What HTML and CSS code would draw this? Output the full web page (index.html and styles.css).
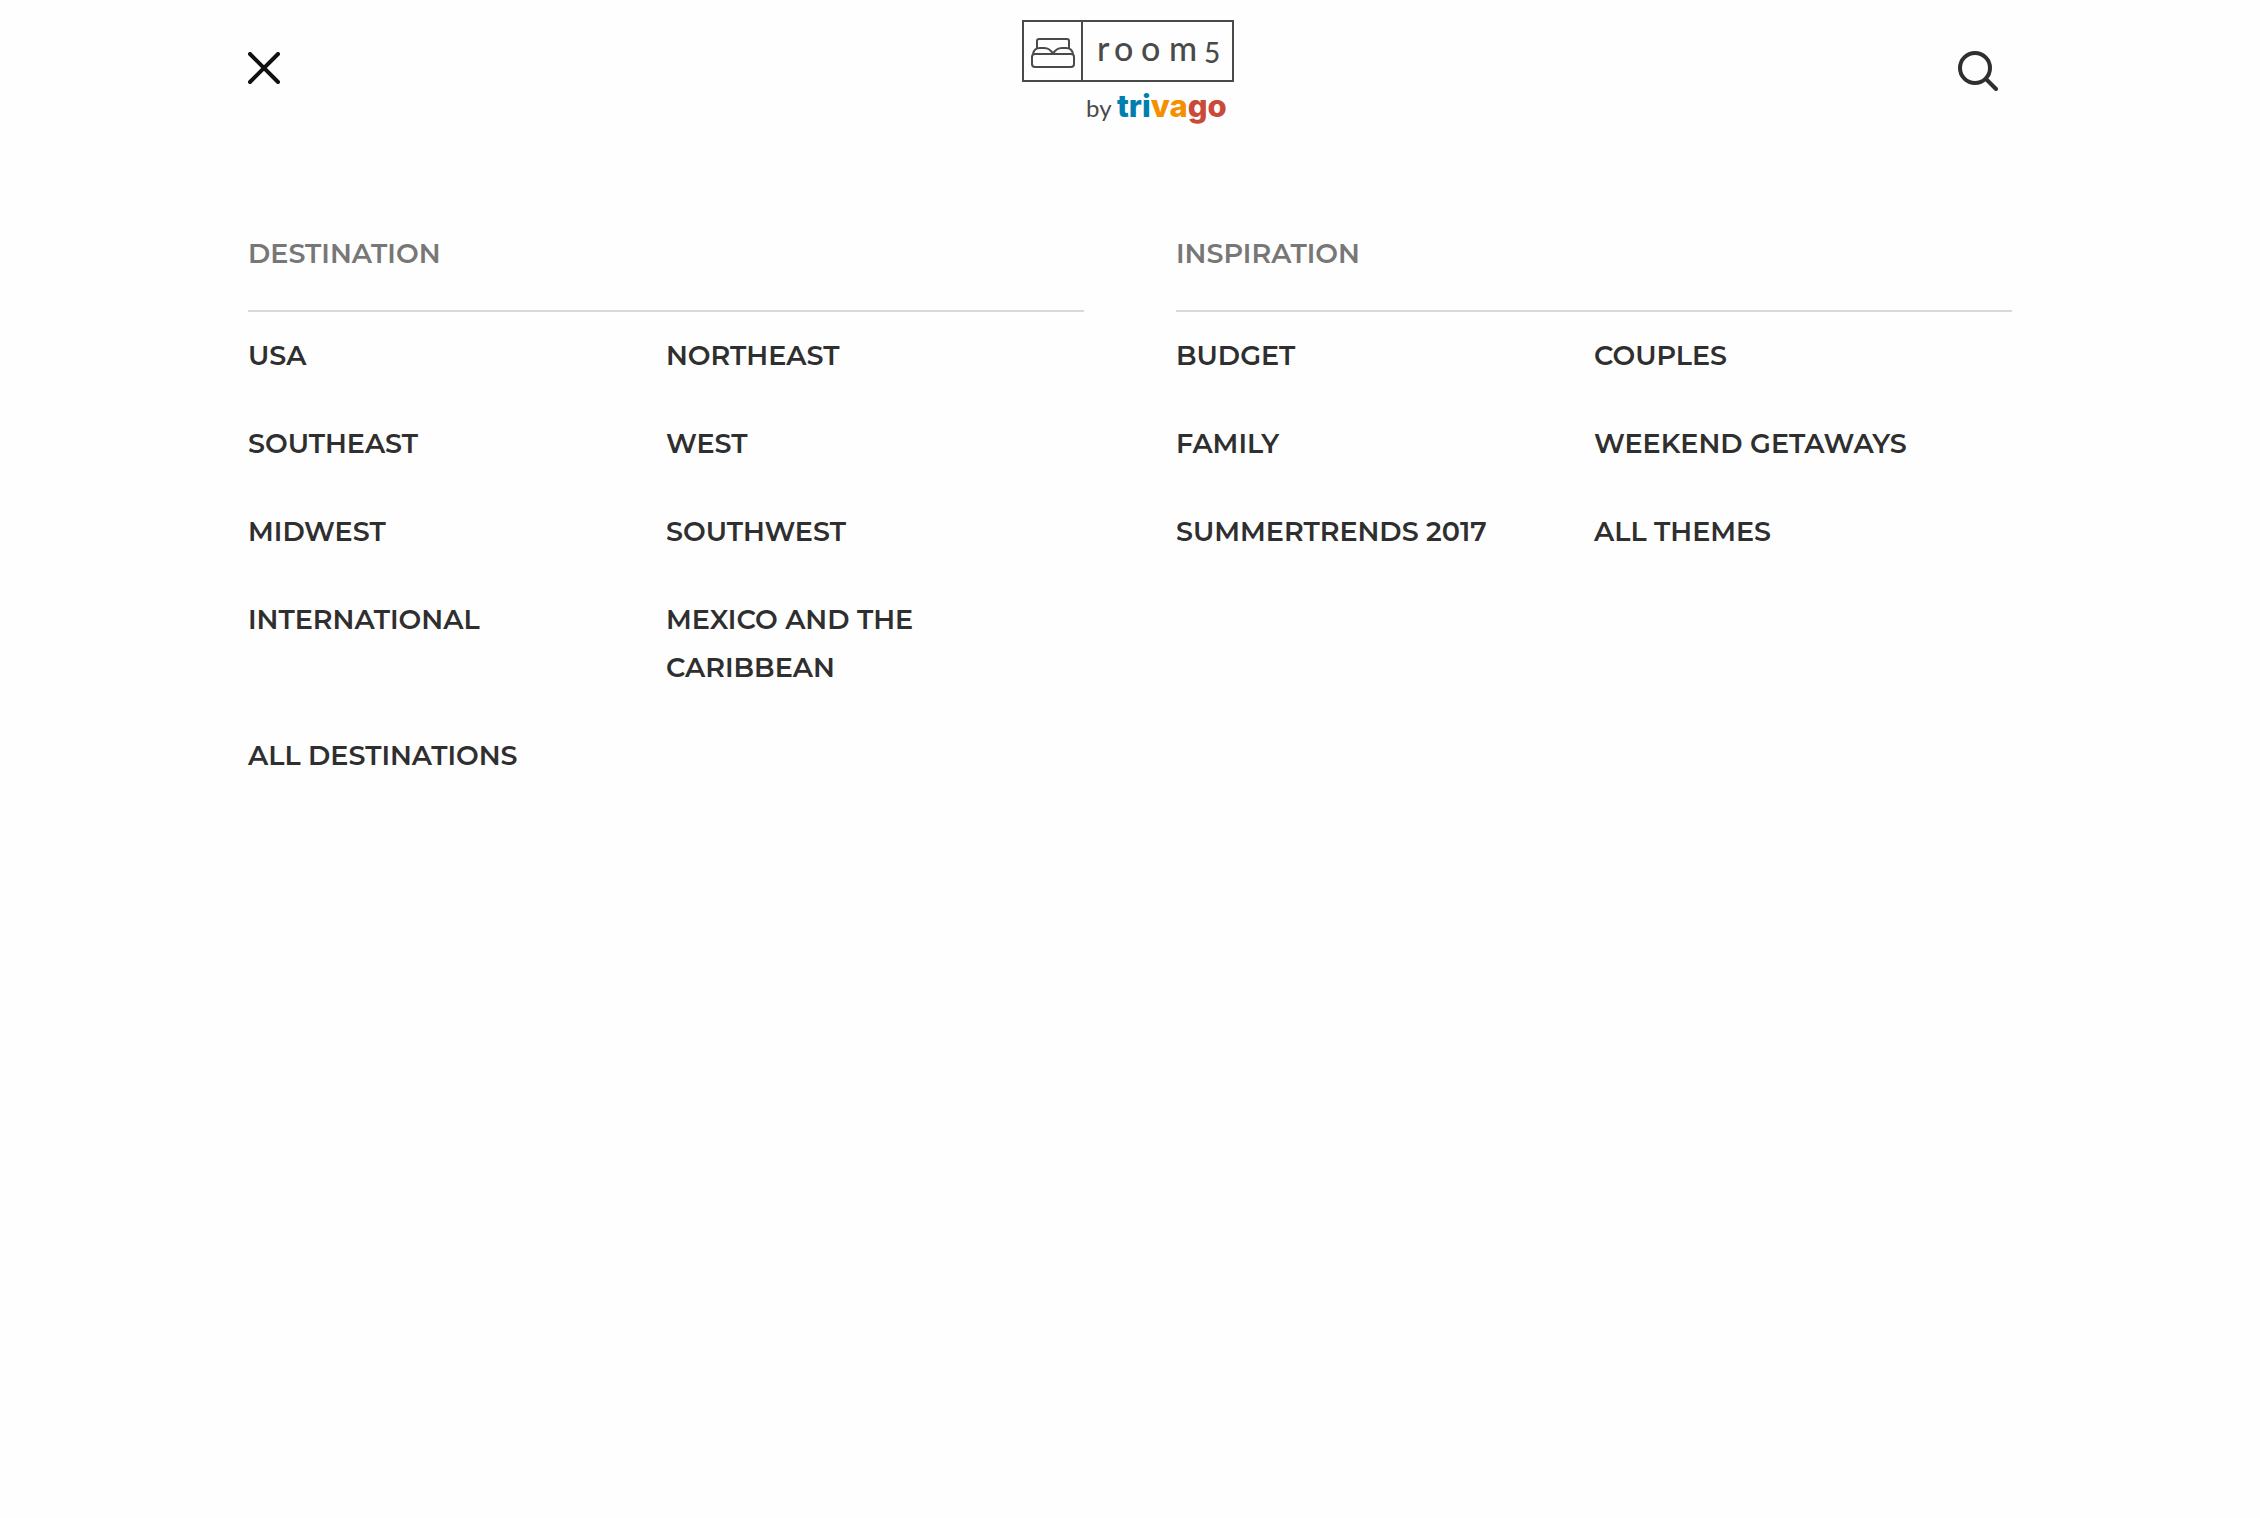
FILE: index.html
```html
<!DOCTYPE html>
<html lang="en">
<head>
<meta charset="utf-8">
<meta name="viewport" content="width=device-width, initial-scale=1">
<title>room5 by trivago</title>
<link rel="stylesheet" href="styles.css">
</head>
<body>
<header class="header container">
  <button class="icon-button" type="button" aria-label="Close menu">
    <svg width="32" height="32" viewBox="0 0 32 32" fill="none" stroke="#111" stroke-width="4" stroke-linecap="round"><path d="M2 2 30 30M30 2 2 30"/></svg>
  </button>
  <a class="logo" href="#" aria-label="room5 by trivago">
    <svg width="216" height="108" viewBox="0 0 216 108">
      <g fill="none" stroke="#4a4a4a" stroke-width="2" stroke-linejoin="round">
        <path stroke-linejoin="miter" d="M1 1H211V61H1ZM60 1V61"/>
        <path d="M15 28V21Q15 19 17 19H45Q47 19 47 21V28"/>
        <path d="M11 34Q12 28 18 28H22Q28 28 31 34Q34 28 40 28H44Q50 28 51 34"/>
        <path d="M13 34H49Q52 34 52 37V44Q52 47 49 47H13Q10 47 10 44V37Q10 34 13 34Z"/>
      </g>
      <text class="logo-room" y="41"><tspan x="75">r</tspan><tspan x="92">o</tspan><tspan x="119">o</tspan><tspan x="147">m</tspan><tspan class="logo-five" x="182" y="43">5</tspan></text>
      <text class="logo-by" x="64" y="97">by</text>
      <text class="logo-trivago" x="95" y="97"><tspan fill="#007faf">tri</tspan><tspan fill="#f48f00">va</tspan><tspan fill="#c94a38">go</tspan></text>
    </svg>
  </a>
  <button class="icon-button icon-button-search" type="button" aria-label="Search">
    <svg width="40" height="40" viewBox="0 0 40 40" fill="none" stroke="#2f2f2f" stroke-width="4" stroke-linecap="round"><circle cx="17" cy="17" r="15"/><path d="M28 28 38 38"/></svg>
  </button>
</header>
<nav class="menu container" aria-label="Main">
  <section>
    <h2 class="menu-title">DESTINATION</h2>
    <ul class="menu-list">
      <li><a href="#">USA</a></li>
      <li><a href="#">NORTHEAST</a></li>
      <li><a href="#">SOUTHEAST</a></li>
      <li><a href="#">WEST</a></li>
      <li><a href="#">MIDWEST</a></li>
      <li><a href="#">SOUTHWEST</a></li>
      <li><a href="#">INTERNATIONAL</a></li>
      <li><a href="#">MEXICO AND THE CARIBBEAN</a></li>
      <li><a href="#">ALL DESTINATIONS</a></li>
    </ul>
  </section>
  <section>
    <h2 class="menu-title">INSPIRATION</h2>
    <ul class="menu-list">
      <li><a href="#">BUDGET</a></li>
      <li><a href="#">COUPLES</a></li>
      <li><a href="#">FAMILY</a></li>
      <li><a href="#">WEEKEND GETAWAYS</a></li>
      <li><a href="#">SUMMERTRENDS 2017</a></li>
      <li><a href="#">ALL THEMES</a></li>
    </ul>
  </section>
</nav>
</body>
</html>
```
FILE: styles.css
```css
* {
  box-sizing: border-box;
}

body {
  margin: 0;
  background: #fefefe;
  color: #2f2f2f;
  font: 600 27px/48px Montserrat, Inter, sans-serif;
}

.container {
  width: 100%;
  max-width: 1812px;
  margin: 0 auto;
  padding: 0 24px;
}

.header {
  display: grid;
  grid-template-columns: 1fr auto 1fr;
  align-items: start;
  padding-top: 20px;
}

.icon-button {
  justify-self: start;
  margin: 32px 0 0;
  padding: 0;
  border: 0;
  background: none;
  cursor: pointer;
}

.icon-button-search {
  justify-self: end;
  margin: 31px 14px 0 0;
}

.icon-button svg,
.logo svg {
  display: block;
}

.logo-room {
  font: 500 34px Lato, sans-serif;
  fill: #4a4a4a;
}

.logo-five {
  font-size: 28px;
}

.logo-by {
  font: 400 24px Lato, sans-serif;
  fill: #4a4a4a;
}

.logo-trivago {
  font: 800 31px Inter, sans-serif;
}

.menu {
  display: grid;
  grid-template-columns: 1fr 1fr;
  gap: 92px;
  padding-top: 102px;
}

.menu-title {
  margin: 0 0 20px;
  padding-bottom: 32px;
  border-bottom: 2px solid #d9d9d9;
  color: #777;
  font: inherit;
}

.menu-list {
  display: grid;
  grid-template-columns: 1fr 1fr;
  row-gap: 40px;
  margin: 0;
  padding: 0;
  list-style: none;
}

.menu-list li {
  padding-right: 40px;
}

.menu-list a {
  color: inherit;
  text-decoration: none;
}
```
